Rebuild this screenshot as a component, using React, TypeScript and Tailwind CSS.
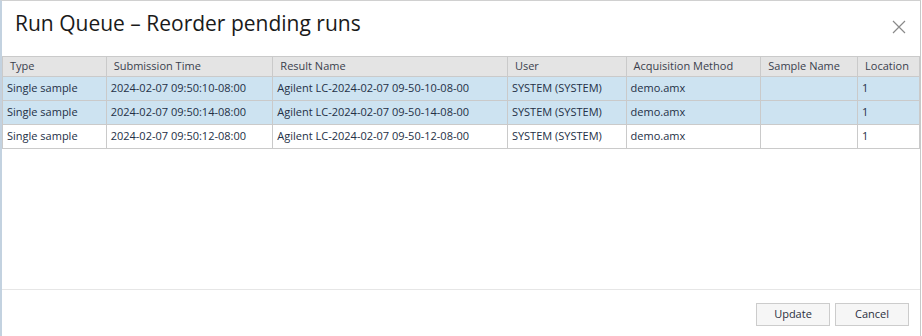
import React from "react";

const columns = [
  { label: "Type", width: 104 },
  { label: "Submission Time", width: 167 },
  { label: "Result Name", width: 235 },
  { label: "User", width: 119 },
  { label: "Acquisition Method", width: 135 },
  { label: "Sample Name", width: 97 },
  { label: "Location", width: 62 },
];

const rows = [
  { time: "2024-02-07 09:50:10-08:00", result: "Agilent LC-2024-02-07 09-50-10-08-00", selected: true },
  { time: "2024-02-07 09:50:14-08:00", result: "Agilent LC-2024-02-07 09-50-14-08-00", selected: true },
  { time: "2024-02-07 09:50:12-08:00", result: "Agilent LC-2024-02-07 09-50-12-08-00", selected: false },
];

export default function App() {
  return (
    <div
      className="w-[922px] h-[336px] bg-white overflow-hidden"
      style={{ fontFamily: '"Open Sans", "Noto Sans", sans-serif' }}
    >
      <div className="h-full w-[921px] border-t border-r border-l-2 border-t-[#d0d0d0] border-r-[#c8c8c8] border-l-[#c3d2e0] flex flex-col">
        {/* Header */}
        <div className="flex items-center justify-between h-[55px] pl-[13px] pr-[14px]">
          <h1 className="text-[21px] text-[#1a1a1a] -mt-[9px]">
            Run Queue – Reorder pending runs
          </h1>
          <button className="text-[#8a8a8a] -mt-[4px]">
            <svg width="14" height="14" viewBox="0 0 14 14" fill="none" stroke="currentColor" strokeWidth="1.2">
              <path d="M1 1 L13 13 M13 1 L1 13" />
            </svg>
          </button>
        </div>

        {/* Table */}
        <div className="flex-1">
          <table className="border-collapse table-fixed text-[11px] text-[#243046]">
            <colgroup>
              {columns.map((c) => (
                <col key={c.label} style={{ width: c.width }} />
              ))}
            </colgroup>
            <thead>
              <tr className="bg-[#e4e4e4] h-[20px]">
                {columns.map((c) => (
                  <th
                    key={c.label}
                    className="border border-[#cacaca] font-normal text-left pl-[7px] text-[#3a3f4d] truncate"
                  >
                    {c.label}
                  </th>
                ))}
              </tr>
            </thead>
            <tbody>
              {rows.map((r) => (
                <tr key={r.time} className={`h-[24px] ${r.selected ? "bg-[#cde3f1]" : "bg-white"}`}>
                  <td className="border border-[#cacaca] pl-[4px] truncate">Single sample</td>
                  <td className="border border-[#cacaca] pl-[4px] truncate">{r.time}</td>
                  <td className="border border-[#cacaca] pl-[4px] truncate">{r.result}</td>
                  <td className="border border-[#cacaca] pl-[4px] truncate">SYSTEM (SYSTEM)</td>
                  <td className="border border-[#cacaca] pl-[4px] truncate">demo.amx</td>
                  <td className="border border-[#cacaca] pl-[4px] truncate"></td>
                  <td className="border border-[#cacaca] pl-[4px] truncate">1</td>
                </tr>
              ))}
            </tbody>
          </table>
        </div>

        {/* Footer */}
        <div className="border-t border-[#e6e6e6] h-[47px] flex items-start justify-end gap-[5px] pt-[13px] pr-[11px]">
          <button className="w-[74px] h-[23px] border border-[#cccccc] bg-[#f6f6f6] text-[11px] text-[#2b3040]">
            Update
          </button>
          <button className="w-[74px] h-[23px] border border-[#cccccc] bg-[#f6f6f6] text-[11px] text-[#2b3040]">
            Cancel
          </button>
        </div>
      </div>
    </div>
  );
}
